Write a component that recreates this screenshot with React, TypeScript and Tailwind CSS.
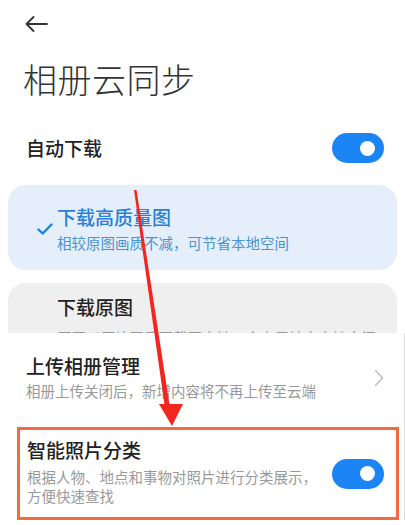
import React from "react";

function Toggle() {
  return (
    <div className="w-[52px] h-[30px] rounded-full bg-[#1b85f6] flex items-center justify-end pr-[9px] shrink-0">
      <div className="w-[15px] h-[15px] rounded-full bg-white" />
    </div>
  );
}

export default function App() {
  return (
    <div className="relative w-[405px] h-[525px] overflow-hidden bg-white font-['Noto_Sans_CJK_SC','Noto_Sans',sans-serif]">
      {/* header */}
      <div className="pt-[16px] pl-[25px] h-[32px]">
        <svg width="23" height="16" viewBox="0 0 23 16" fill="none" stroke="#333" strokeWidth="1.8" strokeLinecap="round" strokeLinejoin="round">
          <path d="M22 8H1.5M8.5 1L1.5 8l7 7" />
        </svg>
      </div>
      <div className="mt-[30px] pl-[23px] text-[34px] leading-[34px] font-light text-[#333] tracking-[0.5px]">相册云同步</div>

      <div className="mt-[37px] pl-[26px] pr-[21px] flex items-center justify-between h-[30px]">
        <div className="text-[19px] leading-[22px] font-medium text-[#222]">自动下载</div>
        <Toggle />
      </div>

      <div className="mt-[22px] mx-[8px] h-[85px] rounded-[18px] bg-[#e4effb] flex">
        <div className="w-[49px] flex items-center justify-end pr-[4px] pt-[2px]">
          <svg width="16" height="12" viewBox="0 0 16 12" fill="none" stroke="#1f7fe0" strokeWidth="2.4" strokeLinecap="round" strokeLinejoin="round">
            <path d="M1.5 6.5l4.2 4L14.5 1.5" />
          </svg>
        </div>
        <div className="pt-[21px]">
          <div className="text-[19px] leading-[22px] font-medium text-[#2a80d6]">下载高质量图</div>
          <div className="mt-[6px] text-[14.5px] leading-[18px] text-[#4d93cc]">相较原图画质不减，可节省本地空间</div>
        </div>
      </div>

      <div className="mt-[13px] mx-[8px] h-[50px] overflow-hidden rounded-t-[18px] bg-[#efefef] pl-[49px] pt-[13px]">
        <div className="text-[19px] leading-[22px] font-medium text-[#222]">下载原图</div>
        <div className="mt-[11px] text-[14.5px] leading-[18px] text-[#999] whitespace-nowrap">原图以原始画质下载至本地，会占用较大本地空间</div>
      </div>

      {/* bottom panel */}
      <div className="bg-white border-r border-[#dedede] w-[405px]">
        <div className="flex items-center pl-[26px] pr-[20px] pt-[22px]">
          <div className="flex-1">
            <div className="text-[19px] leading-[22px] font-medium text-[#222]">上传相册管理</div>
            <div className="mt-[5px] text-[14.5px] leading-[18px] text-[#999]">相册上传关闭后，新增内容将不再上传至云端</div>
          </div>
          <svg width="10" height="18" viewBox="0 0 10 18" fill="none" stroke="#bbb" strokeWidth="1.4" strokeLinecap="round" strokeLinejoin="round">
            <path d="M1.5 1.5L8.5 9l-7 7.5" />
          </svg>
        </div>

        <div className="mt-[27px] ml-[17px] mr-[5px] h-[93px] border-[3px] border-[#f26a3d] flex items-center pl-[7px] pr-[12px]">
          <div className="flex-1 self-start pt-[9px]">
            <div className="text-[19px] leading-[22px] font-medium text-[#222]">智能照片分类</div>
            <div className="mt-[6px] text-[14.5px] leading-[19px] text-[#999] whitespace-nowrap">
              根据人物、地点和事物对照片进行分类展示，
              <br />
              方便快速查找
            </div>
          </div>
          <Toggle />
        </div>
      </div>

      {/* red annotation arrow */}
      <svg className="absolute left-0 top-0 pointer-events-none" width="405" height="525" viewBox="0 0 405 525">
        <polygon points="134,190 136.5,190 170,408 165,408" fill="#f2261f" />
        <polygon points="159,404 183,404 172,426" fill="#f2261f" />
      </svg>
    </div>
  );
}
